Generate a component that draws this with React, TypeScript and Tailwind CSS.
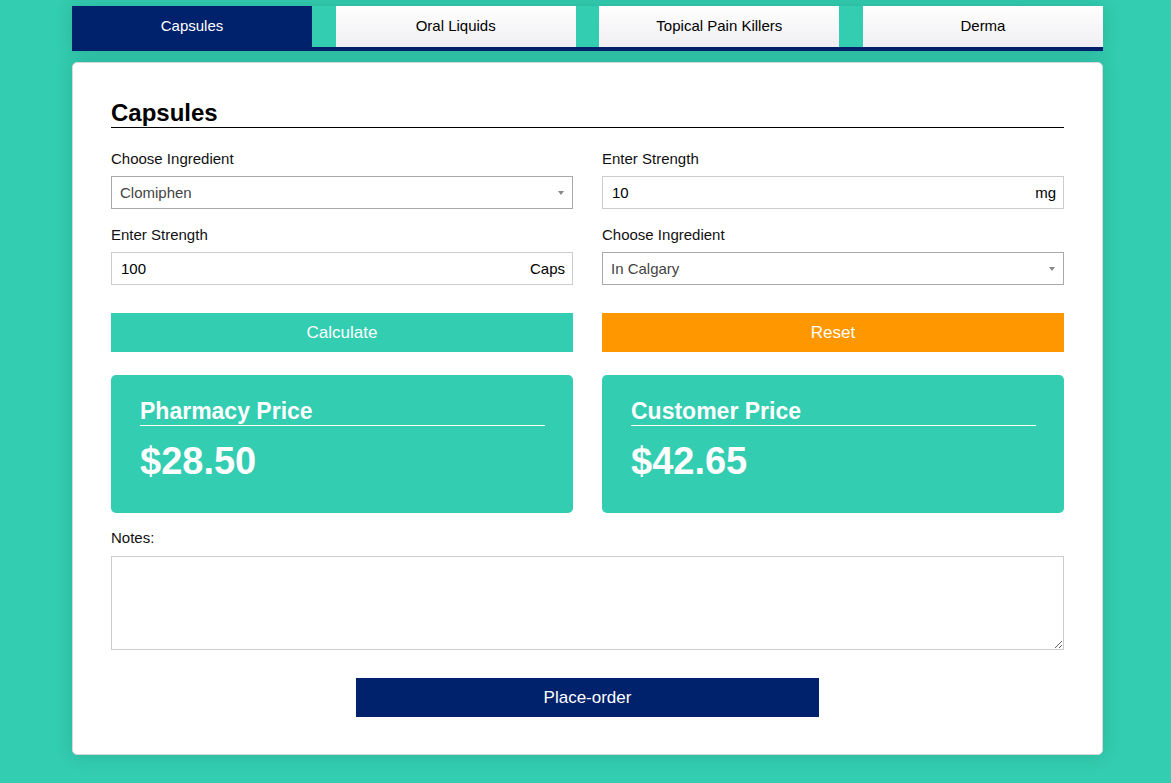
import { useState } from "react";

const tabs = ["Capsules", "Oral Liquids", "Topical Pain Killers", "Derma"];

function SelectField({ label, value }: { label: string; value: string }) {
  return (
    <div className="flex flex-col">
      <label className="mb-[9px] text-[15px] leading-[17px] text-[#111]">{label}</label>
      <div className="relative flex h-[33px] items-center border border-[#a9a9a9] bg-white pl-[8px] pt-[1px] text-[15px] text-[#444]">
        <span>{value}</span>
        <span className="absolute right-[8px] top-[14px] h-0 w-0 border-x-[3px] border-t-[4px] border-x-transparent border-t-[#888]" />
      </div>
    </div>
  );
}

function UnitField({ label, value, unit }: { label: string; value: string; unit: string }) {
  return (
    <div className="flex flex-col">
      <label className="mb-[9px] text-[15px] leading-[17px] text-[#111]">{label}</label>
      <div className="flex h-[33px] items-center justify-between border border-[#ccc] bg-white pl-[9px] pr-[7px] pt-[1px] text-[15px] text-black">
        <span>{value}</span>
        <span>{unit}</span>
      </div>
    </div>
  );
}

function PriceCard({ title, price }: { title: string; price: string }) {
  return (
    <div className="rounded-[5px] bg-[#33cdb1] pl-[29px] pr-[28px] pt-[22px] pb-[29px] text-white">
      <h3 className="border-b border-white text-[23px] font-bold leading-[28px]">{title}</h3>
      <div className="mt-[12px] text-[38px] font-bold leading-[46px]">{price}</div>
    </div>
  );
}

export default function App() {
  const [active] = useState(0);

  return (
    <div className="h-screen overflow-hidden bg-[#33cdb1] font-['Liberation_Sans',Arial,sans-serif]">
      <div className="ml-[72px] w-[1031px] pt-[6px]">
        <nav className="flex justify-between border-b-4 border-[#00216b] shadow-[0_0_18px_rgba(0,60,50,0.18)]">
          {tabs.map((t, i) => (
            <button
              key={t}
              className={
                i === active
                  ? "flex h-[41px] w-[240px] items-center justify-center bg-[#00216b] text-[15px] text-white"
                  : "flex h-[41px] w-[240px] items-center justify-center bg-linear-to-b from-white to-[#efeff3] text-[15px] text-black"
              }
            >
              {t}
            </button>
          ))}
        </nav>

        <div className="mt-[11px] rounded-[5px] border border-[#d8d8d8] bg-white px-[38px] pt-[36px] pb-[37px] shadow-[0_0_18px_rgba(0,60,50,0.18)]">
          <h2 className="border-b border-black text-[24px] font-bold leading-[28px] text-black">Capsules</h2>

          <div className="mt-[22px] grid grid-cols-2 gap-x-[29px] gap-y-[17px]">
            <SelectField label="Choose Ingredient" value="Clomiphen" />
            <UnitField label="Enter Strength" value="10" unit="mg" />
            <UnitField label="Enter Strength" value="100" unit="Caps" />
            <SelectField label="Choose Ingredient" value="In Calgary" />
          </div>

          <div className="mt-[28px] grid grid-cols-2 gap-x-[29px]">
            <button className="h-[39px] bg-[#33cdb1] text-[17px] text-white">Calculate</button>
            <button className="h-[39px] bg-[#ff9800] text-[17px] text-white">Reset</button>
          </div>

          <div className="mt-[23px] grid grid-cols-2 gap-x-[29px]">
            <PriceCard title="Pharmacy Price" price="$28.50" />
            <PriceCard title="Customer Price" price="$42.65" />
          </div>

          <label className="mt-[17px] block text-[15px] leading-[16px] text-[#111]">Notes:</label>
          <textarea className="mt-[10px] block h-[94px] w-full border border-[#ccc] bg-white outline-none" />

          <div className="mt-[28px] flex justify-center">
            <button className="h-[39px] w-[463px] bg-[#00216b] text-[17px] text-white">Place-order</button>
          </div>
        </div>
      </div>
    </div>
  );
}
